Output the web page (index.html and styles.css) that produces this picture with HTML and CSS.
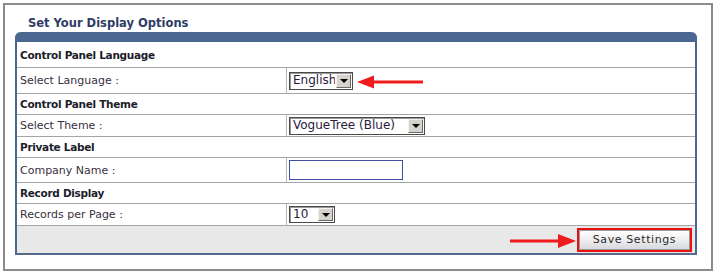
FILE: index.html
```html
<!DOCTYPE html>
<html>
<head>
<meta charset="utf-8">
<link rel="stylesheet" href="styles.css">
</head>
<body>
<div class="frame">
  <div class="title">Set Your Display Options</div>
  <div class="panel">
    <div class="bar"></div>
    <div class="row head h26">Control Panel Language</div>
    <div class="row field h26">
      <div class="label">Select Language :</div>
      <div class="value">
        <div class="select w-lang"><span class="stext">English</span><span class="sbtn"><span class="tri"></span></span></div>
      </div>
    </div>
    <div class="row head h21">Control Panel Theme</div>
    <div class="row field h22">
      <div class="label">Select Theme :</div>
      <div class="value">
        <div class="select w-theme"><span class="stext">VogueTree (Blue)</span><span class="sbtn"><span class="tri"></span></span></div>
      </div>
    </div>
    <div class="row head h21">Private Label</div>
    <div class="row field h25">
      <div class="label">Company Name :</div>
      <div class="value"><div class="textbox"></div></div>
    </div>
    <div class="row head h21">Record Display</div>
    <div class="row field h22">
      <div class="label">Records per Page :</div>
      <div class="value">
        <div class="select w-rec"><span class="stext">10</span><span class="sbtn"><span class="tri"></span></span></div>
      </div>
    </div>
    <div class="footer">
      <div class="btnwrap"><div class="btn">Save Settings</div></div>
    </div>
  </div>
  <svg class="arrow arrow1" width="68" height="16" viewBox="0 0 68 16"><rect x="14" y="6.5" width="52" height="3" fill="#ee1c1c"/><polygon points="0,8 17,1.5 17,14.5" fill="#ee1c1c"/></svg>
  <svg class="arrow arrow2" width="68" height="16" viewBox="0 0 68 16"><rect x="2" y="6.5" width="52" height="3" fill="#ee1c1c"/><polygon points="68,8 50,1 50,15" fill="#ee1c1c"/></svg>
</div>
</body>
</html>
```

FILE: styles.css
```css
html, body { margin: 0; padding: 0; background: #fff; }
body { font-family: "DejaVu Sans", Verdana, sans-serif; font-size: 11px; color: #333; }
.frame {
  position: relative;
  margin: 3px;
  width: 710px;
  height: 268px;
  box-sizing: border-box;
  border: 2px solid #8c8c8c;
  background: #fff;
}
.title {
  padding: 11px 0 0 23px;
  height: 16px;
  line-height: 14px;
  font-size: 11.5px;
  font-weight: bold;
  color: #2e3d66;
}
.panel {
  margin-left: 10px;
  width: 682px;
  box-sizing: border-box;
  border-left: 2px solid #4d6890;
  border-right: 2px solid #4d6890;
  border-bottom: 2px solid #56698a;
  border-radius: 6px 6px 0 0;
}
.bar {
  height: 10px;
  margin: 0 -2px;
  background: #4a6892;
  border-radius: 6px 6px 0 0;
}
.row {
  display: flex;
  align-items: center;
  box-sizing: border-box;
  border-bottom: 1px solid #a2a6ab;
}
.h26 { height: 26px; }
.h25 { height: 25px; }
.h22 { height: 22px; }
.h21 { height: 21px; }
.head { padding-left: 3px; font-weight: bold; font-size: 10.5px; letter-spacing: -0.3px; color: #1c1c2a; }
.field { align-items: stretch; color: #3a2f3f; }
.label {
  width: 270px;
  padding-left: 3px;
  box-sizing: border-box;
  border-right: 1px solid #b4b8bc;
  display: flex;
  align-items: center;
}
.value {
  flex: 1;
  display: flex;
  align-items: center;
  padding-left: 2px;
}
.select {
  display: flex;
  align-items: stretch;
  box-sizing: border-box;
  border: 1px solid #4a4a4a;
  box-shadow: inset 1px 1px 0 #9a9a9a;
  background: #fff;
  font-size: 12px;
  color: #2a1a40;
}
.w-lang { width: 64px; height: 18px; }
.w-theme { width: 136px; height: 18px; }
.w-rec { width: 46px; height: 17px; }
.stext { flex: 1; padding-left: 3px; line-height: 15px; white-space: nowrap; overflow: hidden; }
.sbtn {
  width: 15px;
  margin: 1px;
  box-sizing: border-box;
  background: #d6d3cc;
  border: 1px solid;
  border-color: #f4f2ee #6a6a6a #6a6a6a #f4f2ee;
  display: flex;
  align-items: center;
  justify-content: center;
}
.tri {
  width: 0; height: 0;
  border-left: 4px solid transparent;
  border-right: 4px solid transparent;
  border-top: 4px solid #000;
}
.textbox {
  width: 114px;
  height: 20px;
  box-sizing: border-box;
  border: 1px solid #3e50a2;
  background: #fff;
}
.footer {
  height: 27px;
  background: #e8e8e8;
  display: flex;
  justify-content: flex-end;
  align-items: center;
}
.btnwrap {
  margin-right: 3px;
  width: 115px;
  height: 24px;
  box-sizing: border-box;
  border: 2px solid #ea1010;
  display: flex;
}
.btn {
  flex: 1;
  box-sizing: border-box;
  border: 1px solid #9a9a9a;
  background: linear-gradient(#ffffff, #f0f0f2 45%, #d6d8dc);
  display: flex;
  align-items: center;
  justify-content: center;
  font-size: 11px;
  letter-spacing: 0.6px;
  color: #2a2a2a;
}
.arrow { position: absolute; }
.arrow1 { left: 352px; top: 69px; }
.arrow2 { left: 503px; top: 228px; }
```
